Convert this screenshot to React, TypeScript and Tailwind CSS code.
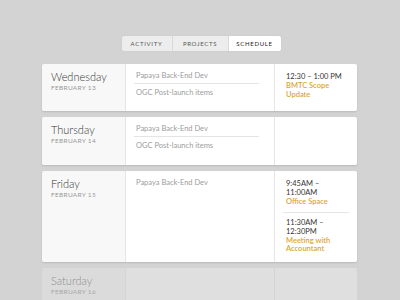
const font = { fontFamily: "Lato, 'Open Sans', sans-serif" };

type Event = { time: string[]; title: string[] };
type Day = { name: string; date: string; items: string[]; events: Event[]; faded?: boolean; h: string };

const days: Day[] = [
  {
    name: "Wednesday",
    date: "FEBRUARY 13",
    items: ["Papaya Back-End Dev", "OGC Post-launch items"],
    events: [{ time: ["12:30 – 1:00 PM"], title: ["BMTC Scope", "Update"] }],
    h: "h-[47px]",
  },
  {
    name: "Thursday",
    date: "FEBRUARY 14",
    items: ["Papaya Back-End Dev", "OGC Post-launch items"],
    events: [],
    h: "h-[48px]",
  },
  {
    name: "Friday",
    date: "FEBRUARY 15",
    items: ["Papaya Back-End Dev"],
    events: [
      { time: ["9:45AM –", "11:00AM"], title: ["Office Space"] },
      { time: ["11:30AM –", "12:30PM"], title: ["Meeting with", "Accountant"] },
    ],
    h: "h-[91px]",
  },
  {
    name: "Saturday",
    date: "FEBRUARY 16",
    items: [],
    events: [],
    faded: true,
    h: "h-[60px]",
  },
];

function DayCard({ day }: { day: Day }) {
  const f = day.faded;
  return (
    <div
      className={`flex ${day.h} rounded-[2px] overflow-hidden ${
        f ? "" : "shadow-[0_1px_2px_rgba(0,0,0,0.12)]"
      }`}
    >
      <div
        className={`w-[84px] shrink-0 border-r pl-[9px] pt-[6px] ${
          f ? "bg-[#dbdbdb] border-[#d4d4d4]" : "bg-[#f8f8f8] border-[#e6e6e6]"
        }`}
      >
        <div className={`text-[11px] leading-[14px] font-light ${f ? "text-[#8f8f8f]" : "text-[#333]"}`}>
          {day.name}
        </div>
        <div className={`text-[6.5px] leading-[8px] tracking-[0.3px] ${f ? "text-[#a8a8a8]" : "text-[#999]"}`}>
          {day.date}
        </div>
      </div>
      <div
        className={`w-[149px] shrink-0 border-r pl-[8px] pr-[15px] pt-[8px] ${
          f ? "bg-[#dfdfdf] border-[#d4d4d4]" : "bg-white border-[#e6e6e6]"
        }`}
      >
        {day.items.map((it, i) => (
          <div
            key={it}
            className={`pl-[2px] text-[7.5px] leading-[7px] text-[#9c9c9c] ${
              i > 0 ? "pt-[5px]" : "pb-[4px] border-b border-[#e4e4e4]"
            } ${day.items.length === 1 ? "border-b-0" : ""}`}
          >
            {it}
          </div>
        ))}
      </div>
      <div className={`flex-1 pl-[8px] pr-[8px] pt-[8px] ${f ? "bg-[#dfdfdf]" : "bg-white"}`}>
        {day.events.map((ev, i) => (
          <div
            key={i}
            className={`pl-[3px] ${i > 0 ? "pt-[5px]" : ""} ${
              i < day.events.length - 1 ? "pb-[5px] border-b border-[#e4e4e4]" : ""
            }`}
          >
            {ev.time.map((t) => (
              <div key={t} className="text-[7.5px] leading-[9px] text-[#333]">
                {t}
              </div>
            ))}
            <div className="pt-[1px]">
              {ev.title.map((t) => (
                <div key={t} className="text-[7.5px] leading-[8.5px] font-semibold text-[#dba632]">
                  {t}
                </div>
              ))}
            </div>
          </div>
        ))}
      </div>
    </div>
  );
}

export default function App() {
  return (
    <div className="w-[400px] h-[300px] overflow-hidden bg-[#d3d3d3]" style={font}>
      <div className="flex justify-center pt-[36px] pl-[2px]">
        <div className="flex h-[15px] rounded-[2px] overflow-hidden shadow-[0_0_1px_rgba(0,0,0,0.15)] text-[6px] tracking-[0.7px]">
          <div className="w-[51px] flex items-center justify-center bg-[#ededed] text-[#555] border-r border-[#d9d9d9]">
            ACTIVITY
          </div>
          <div className="w-[56px] flex items-center justify-center bg-[#ededed] text-[#555] border-r border-[#d9d9d9]">
            PROJECTS
          </div>
          <div className="w-[52px] flex items-center justify-center bg-white text-[#222]">
            SCHEDULE
          </div>
        </div>
      </div>
      <div className="mt-[13px] ml-[42px] w-[315px] flex flex-col gap-[6px]">
        {days.map((d) => (
          <DayCard key={d.name} day={d} />
        ))}
      </div>
    </div>
  );
}
